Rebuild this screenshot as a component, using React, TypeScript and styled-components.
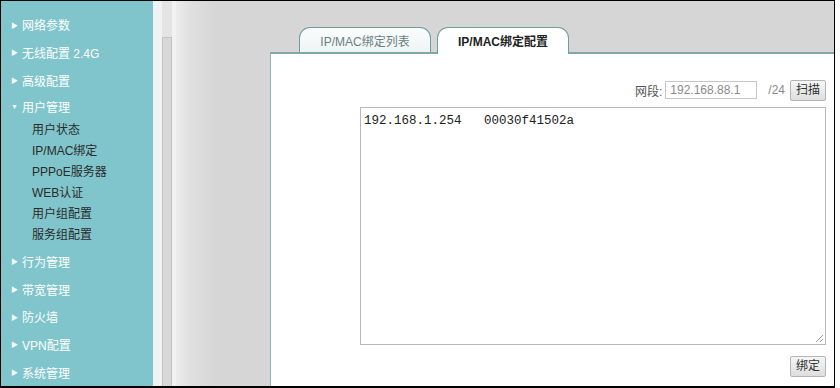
import React from "react";
import styled, { createGlobalStyle } from "styled-components";

const GlobalStyle = createGlobalStyle`
  body {
    margin: 0;
    background: #fff;
    font-family: "Liberation Sans", "Noto Sans CJK SC", sans-serif;
  }
`;

const Frame = styled.div`
  width: 833px;
  height: 385px;
  border: 1px solid #000;
  border-bottom-width: 2px;
  display: flex;
  overflow: hidden;
`;

const Sidebar = styled.div`
  width: 152px;
  background: #80c5cb;
  display: flex;
  flex-direction: column;
  padding-top: 10px;
  box-sizing: border-box;
  font-size: 12px;
  font-family: "Liberation Sans", "Noto Sans CJK SC", sans-serif;
`;

const MenuItem = styled.div<{ $h?: number }>`
  height: ${(p) => p.$h ?? 28}px;
  display: flex;
  align-items: center;
  padding-left: 10px;
  color: #fff;
  gap: 3px;
`;

const Arrow = styled.span`
  font-size: 7px;
  width: 8px;
  color: #f4fbfb;
`;

const SubMenu = styled.div`
  display: flex;
  flex-direction: column;
  padding-bottom: 2px;
`;

const SubItem = styled.div`
  height: 21px;
  line-height: 21px;
  padding-left: 31px;
  color: #2b2b2b;
`;

const ScrollStrip = styled.div`
  width: 23px;
  display: flex;
  background: linear-gradient(to right, #eff3f3 0, #eff3f3 9px, #e4e4e4 9px, #e4e4e4 19px, #f2f2f2 19px);
  padding-top: 36px;
  box-sizing: border-box;
`;

const Thumb = styled.div`
  margin-left: 9px;
  width: 8px;
  border: 1px solid #c4c4c4;
  border-bottom: none;
  background: #d8d8d8;
`;

const Main = styled.div`
  flex: 1;
  background: linear-gradient(to right, #ececec 0, #e0e0e0 14px, #d6d6d6 40px);
  display: flex;
  flex-direction: column;
  padding-left: 94px;
  padding-top: 26px;
`;

const TabBar = styled.div`
  height: 25px;
  display: flex;
  align-items: flex-end;
  gap: 6px;
  padding-left: 29px;
  border-bottom: 2px solid #7ea7a5;
`;

const Tab = styled.div<{ $active?: boolean }>`
  width: 132px;
  height: ${(p) => (p.$active ? 27 : 25)}px;
  box-sizing: border-box;
  border: 1px solid #6f9f9c;
  border-bottom: none;
  border-radius: 11px 11px 0 0;
  background: ${(p) => (p.$active ? "#fff" : "linear-gradient(#fbfdfd, #eef4f4)")};
  margin-bottom: ${(p) => (p.$active ? -2 : 0)}px;
  display: flex;
  justify-content: center;
  padding-top: 4px;
  font-size: 12px;
  color: ${(p) => (p.$active ? "#222" : "#6b7f7f")};
  font-weight: ${(p) => (p.$active ? "bold" : "normal")};
`;

const Panel = styled.div`
  flex: 1;
  background: #fff;
  border-left: 1px solid #8fb3b1;
  display: flex;
  flex-direction: column;
  align-items: flex-end;
  padding: 25px 8px 0 89px;
`;

const ScanRow = styled.div`
  display: flex;
  align-items: center;
  height: 22px;
  font-size: 12px;
  color: #555;
`;

const Label = styled.span`
  margin-right: 3px;
`;

const Input = styled.div`
  width: 92px;
  height: 18px;
  box-sizing: border-box;
  border: 1px solid #c6c6c6;
  color: #8a8a8a;
  padding-left: 4px;
  line-height: 16px;
`;

const Suffix = styled.span`
  color: #8a8a8a;
  margin: 0 5px 0 11px;
`;

const Button = styled.div`
  height: 21px;
  box-sizing: border-box;
  padding: 0 5px;
  border: 1px solid #b4b4b4;
  border-radius: 2px;
  background: linear-gradient(#f6f6f6, #dedede);
  color: #333;
  font-size: 12px;
  line-height: 19px;
`;

const TextArea = styled.div`
  align-self: stretch;
  height: 238px;
  margin-top: 6px;
  box-sizing: border-box;
  border: 1px solid #b8b8b8;
  padding: 6px 3px;
  font-family: "Liberation Mono", monospace;
  font-size: 12.5px;
  color: #222;
  white-space: pre;
  position: relative;
`;

const Grip = styled.svg`
  position: absolute;
  right: 1px;
  bottom: 1px;
`;

const Footer = styled.div`
  margin-top: 11px;
`;

export default function App() {
  const top = ["网络参数", "无线配置 2.4G", "高级配置"];
  const sub = ["用户状态", "IP/MAC绑定", "PPPoE服务器", "WEB认证", "用户组配置", "服务组配置"];
  const bottom = ["行为管理", "带宽管理", "防火墙", "VPN配置", "系统管理"];
  return (
    <>
      <GlobalStyle />
      <Frame>
        <Sidebar>
          {top.map((t) => (
            <MenuItem key={t}>
              <Arrow>▶</Arrow>
              {t}
            </MenuItem>
          ))}
          <MenuItem $h={26}>
            <Arrow>▼</Arrow>
            用户管理
          </MenuItem>
          <SubMenu>
            {sub.map((t) => (
              <SubItem key={t}>{t}</SubItem>
            ))}
          </SubMenu>
          {bottom.map((t) => (
            <MenuItem key={t}>
              <Arrow>▶</Arrow>
              {t}
            </MenuItem>
          ))}
        </Sidebar>
        <ScrollStrip>
          <Thumb />
        </ScrollStrip>
        <Main>
          <TabBar>
            <Tab>IP/MAC绑定列表</Tab>
            <Tab $active>IP/MAC绑定配置</Tab>
          </TabBar>
          <Panel>
            <ScanRow>
              <Label>网段:</Label>
              <Input>192.168.88.1</Input>
              <Suffix>/24</Suffix>
              <Button>扫描</Button>
            </ScanRow>
            <TextArea>
              {"192.168.1.254   00030f41502a"}
              <Grip width="9" height="9" viewBox="0 0 9 9">
                <path d="M8 1L1 8M8 5L5 8" stroke="#999" strokeWidth="1" />
              </Grip>
            </TextArea>
            <Footer>
              <Button>绑定</Button>
            </Footer>
          </Panel>
        </Main>
      </Frame>
    </>
  );
}
